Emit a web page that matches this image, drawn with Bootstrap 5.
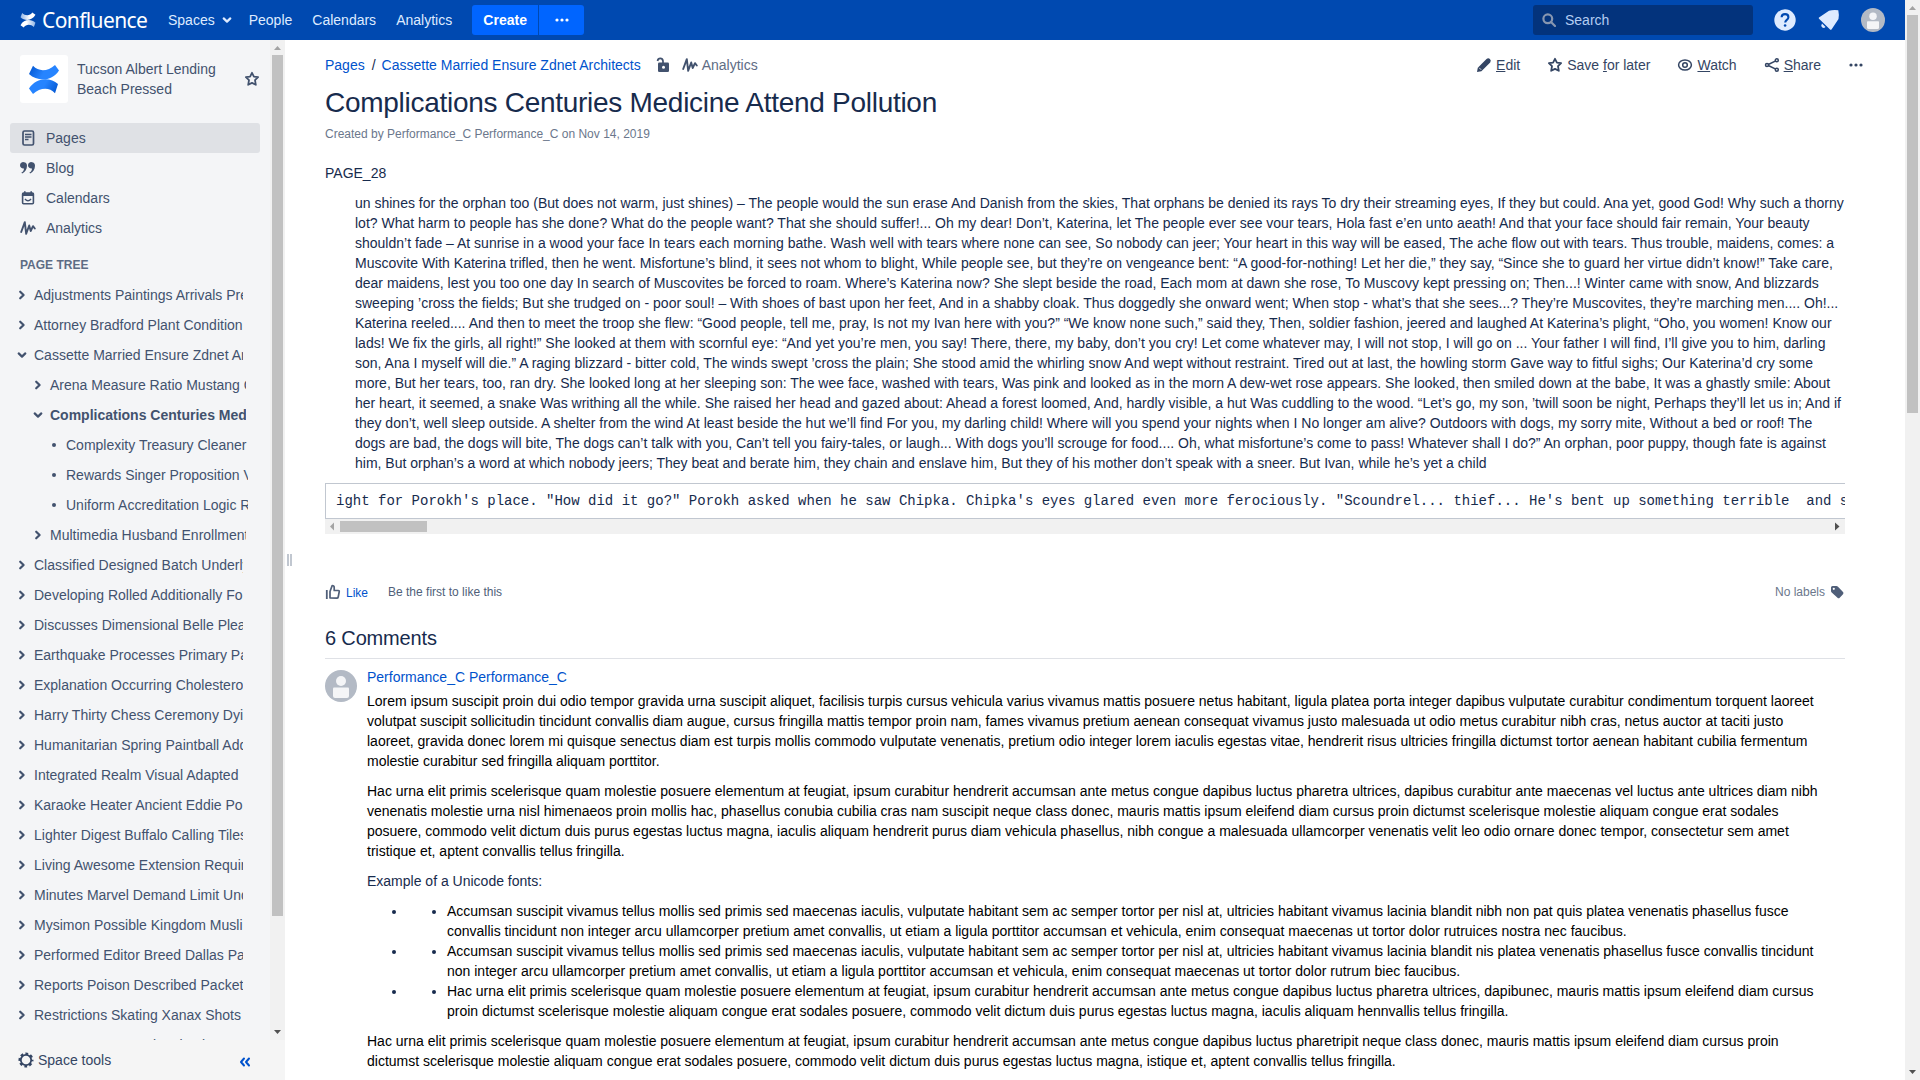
<!DOCTYPE html>
<html lang="en">
<head>
<meta charset="utf-8">
<title>Complications Centuries Medicine Attend Pollution - Confluence</title>
<link href="https://cdn.jsdelivr.net/npm/bootstrap@5.3.0/dist/css/bootstrap.min.css" rel="stylesheet">
<style>
body{font:14px/20px "Liberation Sans",Arial,sans-serif;color:#172b4d;background:#fff;height:1080px;overflow:hidden}
a{color:#0052cc;text-decoration:none}
svg{flex:none;display:block}
.topbar{height:40px;background:#0049b0;color:#deebff;padding:0 20px 0 20px}
.topbar a{color:#deebff}
.brand{width:127px;font:400 21px/40px "Noto Sans",sans-serif;color:#fff!important;letter-spacing:-.6px}
.brand svg{margin-right:6px}
.create-btn,.more-btn{height:30px;background:#0065ff;border:0;color:#fff;font-weight:700;font-size:14px;line-height:20px;padding:0}
.create-btn{width:66px;border-radius:3px 0 0 3px}
.more-btn{width:45px;border-radius:0 3px 3px 0}
.searchbox{width:220px;height:30px;background:#03337c;border-radius:3px;padding-left:9px;color:#b3cdf2}
.sidebar{width:285px;color:#42526e;background:#f4f5f7}
.sidebar a{color:#42526e}
.sidescroll{height:1000px}
.space-logo{width:48px;height:48px;background:#fff;border-radius:3px}
.navrow{height:30px;width:250px;border-radius:3px;padding-left:10px}
.navrow.active{background:#dfe1e5}
.tree-title{font-size:12px;font-weight:700;color:#5e6c84;padding:7px 0 5px 20px;height:32px}
.tree-row{height:30px;line-height:30px;padding-left:16px;width:243px;white-space:nowrap;overflow:hidden}
.tree-row svg{margin-right:6px}
.lvl2{padding-left:32px;width:246px}
.lvl3{padding-left:48px;width:248px}
.vtrack{width:15px;background:#f1f1f1}
.vthumb{width:11px;background:#c1c1c1}
.side-foot{height:40px;background:#f5f5f5;padding:0 32px 0 18px}
.grip{width:5px;height:12px;border:solid #c1c7d0;border-width:0 2px;margin:514px 0 0 2px}
.page-main{padding-left:33px}
.page-body{width:1520px}
.page-tools{padding-right:41px;color:#344563;gap:27px}
.page-title{font-size:28px;line-height:32px;letter-spacing:-.28px;color:#172b4d;margin:12px 0 0}
.byline{font-size:12px;color:#6b778c;margin-top:5px}
.quote-text{padding-left:30px;white-space:nowrap;margin:10px 0}
.codebox{height:36px;border:1px solid #c1c7d0;border-right:0;padding:7px 0 0 10px;font:14px/20px "Liberation Mono",monospace;overflow:hidden;white-space:pre}
.hscroll{height:15px;background:#f1f1f1;padding:0 5px}
.hthumb{height:11px;width:87px;background:#c1c1c1}
.meta{font-size:12px;color:#505f79;height:20px;margin-top:48px}
.comments-title{font-size:20px;line-height:24px;letter-spacing:-.16px;margin:24px 0 0;padding-bottom:8px;border-bottom:1px solid #dfe1e6;height:33px}
.comment-text{color:#000;white-space:nowrap}
.comment-text p{margin:0 0 10px}
.comment-text ul{padding-left:40px;margin:0}
.comment-text li::marker{color:#172b4d}
.comment-text ul ul{list-style:disc}
</style>
<script src="https://cdn.jsdelivr.net/npm/bootstrap@5.3.0/dist/js/bootstrap.bundle.min.js"></script>
</head>
<body>
<svg width="0" height="0" class="position-absolute">
<defs>
<linearGradient id="g1b" x1="0" y1="0" x2="1" y2=".3"><stop offset="0" stop-color="#0052cc"/><stop offset=".6" stop-color="#2684ff"/></linearGradient>
<linearGradient id="g2b" x1="1" y1="1" x2="0" y2=".7"><stop offset="0" stop-color="#0052cc"/><stop offset=".6" stop-color="#2684ff"/></linearGradient>
<linearGradient id="w1" x1="0" y1="0" x2="1" y2="0"><stop offset="0" stop-color="#8fb4e6"/><stop offset=".6" stop-color="#fff"/></linearGradient>
<linearGradient id="w2" x1="1" y1="0" x2="0" y2="0"><stop offset="0" stop-color="#8fb4e6"/><stop offset=".6" stop-color="#fff"/></linearGradient>
</defs>
<symbol id="right" viewBox="0 0 12 12"><path d="M4.2 2.7 7.6 6 4.2 9.3" fill="none" stroke="currentColor" stroke-width="2.2" stroke-linecap="round" stroke-linejoin="round"/></symbol>
<symbol id="down" viewBox="0 0 12 12"><path d="M2.7 4.4 6 7.6 9.3 4.4" fill="none" stroke="currentColor" stroke-width="2.2" stroke-linecap="round" stroke-linejoin="round"/></symbol>
<symbol id="dot" viewBox="0 0 12 12"><circle cx="6" cy="6" r="2" fill="currentColor"/></symbol>
<symbol id="dots" viewBox="0 0 16 16"><g fill="currentColor"><circle cx="3" cy="8" r="1.6"/><circle cx="8" cy="8" r="1.6"/><circle cx="13" cy="8" r="1.6"/></g></symbol>
<symbol id="star" viewBox="0 0 16 16"><path d="M8 1.8 9.9 5.6l4.2.6-3.1 3 .8 4.6L8 11.9l-3.8 1.9.8-4.6-3.1-3 4.2-.6z" fill="none" stroke="currentColor" stroke-width="1.8" stroke-linejoin="round"/></symbol>
<symbol id="wave" viewBox="0 0 16 16"><path d="M1.200 12 4.800 2.200 6.200 13.800 9.200 5.500 10.700 11 13 6.200 14.800 8.500" fill="none" stroke="currentColor" stroke-width="1.900" stroke-linejoin="round" stroke-linecap="round"/></symbol>
<symbol id="person" viewBox="0 0 32 32"><circle cx="16" cy="16" r="16" fill="#b3bac5"/><circle cx="16" cy="11" r="5" fill="#f4f5f7"/><path d="M8 18.5q0-1 1-1h14q1 0 1 1V26q0 2-2 2H10q-2 0-2-2z" fill="#f4f5f7"/></symbol>
</svg>

<div class="d-flex h-100">
<div class="flex-grow-1">
<nav class="topbar d-flex align-items-center">
  <a href="#" class="brand d-flex align-items-center"><svg width="16" height="16" viewBox="0 0 30 34" preserveAspectRatio="none"><path d="M4 2C10 9 19 8 23 1l6 5C23 19 9 20 1 11z" fill="url(#w1)"/><path d="M26 32C20 25 11 26 7 33l-6-5C7 15 21 14 29 23z" fill="url(#w2)"/></svg>Confluence</a>
  <a href="#" class="d-flex align-items-center" style="margin-left:21px">Spaces<svg width="12" height="12" style="margin-left:6px"><use href="#down"/></svg></a>
  <a href="#" style="margin-left:16px">People</a>
  <a href="#" style="margin-left:20px">Calendars</a>
  <a href="#" style="margin-left:20px">Analytics</a>
  <button class="create-btn" style="margin-left:20px">Create</button>
  <button class="more-btn d-flex align-items-center justify-content-center" style="margin-left:1px"><svg width="16" height="16"><use href="#dots"/></svg></button>
  <div class="searchbox d-flex align-items-center ms-auto"><svg width="14" height="14" viewBox="0 0 14 14" style="margin-right:9px"><g fill="none" stroke="#8796b0" stroke-width="2.2"><circle cx="5.8" cy="5.8" r="4.4"/><path d="m9 9 4 4" stroke-linecap="round"/></g></svg>Search</div>
  <svg width="22" height="22" viewBox="0 0 22 22" style="margin-left:21px"><circle cx="11" cy="11" r="10.7" fill="#deebff"/><path d="M7.6 8.3C7.8 4 14.4 4.200 14.400 8.200c0 2.700-3.200 2.600-3.200 5.300" fill="none" stroke="#0049b0" stroke-width="2.100"/><circle cx="11.100" cy="16.500" r="1.300" fill="#0049b0"/></svg>
  <svg width="22" height="22" viewBox="0 0 22 22" style="margin-left:22px"><path d="M1 8.500 11 1.800Q15 .5 20.300 1.200 21.300 6 20.500 10L13.500 20.500Q12.500 21.200 11.800 20.300L1 9.800Q.4 9 1 8.500z" fill="#deebff"/><path d="M4 14.500 7.500 18Q6 19.800 4.300 18.600 2.600 16.500 4 14.500z" fill="#deebff"/></svg>
  <svg width="24" height="24" style="margin-left:21px"><use href="#person"/></svg>
</nav>

<div class="d-flex">
<aside class="sidebar">
  <div class="sidescroll d-flex overflow-hidden">
    <div style="width:270px" class="overflow-hidden">
      <div class="d-flex align-items-center" style="padding:15px 10px 0 20px">
        <div class="space-logo d-flex align-items-center justify-content-center"><svg width="30" height="31" viewBox="0 0 30 34" preserveAspectRatio="none"><path d="M4 2C10 9 19 8 26 1l4 6C23 19 9 20 0 11z" fill="url(#g1b)"/><path d="M26 32C20 25 11 26 4 33l-4-6C7 15 21 14 29 22z" fill="url(#g2b)"/></svg></div>
        <a href="#" style="margin-left:9px">Tucson Albert Lending<br>Beach Pressed</a>
        <svg width="16" height="16" class="ms-auto"><use href="#star"/></svg>
      </div>
      <div style="margin:20px 0 0 10px">
        <a class="navrow active d-flex align-items-center" href="#"><svg width="16" height="16" viewBox="0 0 16 16" style="margin-right:10px"><rect x="3" y="1" width="10.500" height="14" rx="1.500" fill="none" stroke="currentColor" stroke-width="1.700"/><path d="M5 4.500h6.500M5 7h6.500M5 9.500h3.500" stroke="currentColor" stroke-width="1.500"/></svg>Pages</a>
        <a class="navrow d-flex align-items-center" href="#"><svg width="16" height="16" viewBox="0 0 16 16" style="margin-right:10px"><path d="M4 2.200a3.200 3.200 0 1 0 0 6.200c0 2-1 3.300-2.600 4.200l.7 1C5 12.200 7 9.500 7 5.800 7 3.500 5.800 2.200 4 2.200z" fill="currentColor"/><path d="M12 2.200a3.200 3.200 0 1 0 0 6.200c0 2-1 3.300-2.600 4.200l.7 1C13 12.200 15 9.500 15 5.800c0-2.300-1.200-3.600-3-3.600z" fill="currentColor"/></svg>Blog</a>
        <a class="navrow d-flex align-items-center" href="#"><svg width="16" height="16" viewBox="0 0 16 16" style="margin-right:10px"><rect x="2.600" y="3" width="10.800" height="10.800" rx="1" fill="none" stroke="currentColor" stroke-width="1.600"/><path d="M2 3h12v3H2zM4 1.200h1.600v3H4zM10.400 1.200H12v3h-1.600z" fill="currentColor"/><path d="M5 9q3 3.600 6 0" fill="none" stroke="currentColor" stroke-width="1.500"/></svg>Calendars</a>
        <a class="navrow d-flex align-items-center" href="#"><svg width="16" height="16" style="margin-right:10px"><use href="#wave"/></svg>Analytics</a>
      </div>
      <div style="height:5px"></div>
      <div class="tree-title">PAGE TREE</div>
      <div class="tree-row d-flex align-items-center"><svg width="12" height="12"><use href="#right"/></svg>Adjustments Paintings Arrivals Previews</div>
      <div class="tree-row d-flex align-items-center"><svg width="12" height="12"><use href="#right"/></svg>Attorney Bradford Plant Condition</div>
      <div class="tree-row d-flex align-items-center"><svg width="12" height="12"><use href="#down"/></svg>Cassette Married Ensure Zdnet Architects</div>
      <div class="tree-row lvl2 d-flex align-items-center"><svg width="12" height="12"><use href="#right"/></svg>Arena Measure Ratio Mustang Cable</div>
      <div class="tree-row lvl2 d-flex align-items-center fw-bold"><svg width="12" height="12"><use href="#down"/></svg>Complications Centuries Medicine</div>
      <div class="tree-row lvl3 d-flex align-items-center"><svg width="12" height="12"><use href="#dot"/></svg>Complexity Treasury Cleaner</div>
      <div class="tree-row lvl3 d-flex align-items-center"><svg width="12" height="12"><use href="#dot"/></svg>Rewards Singer Proposition Visa</div>
      <div class="tree-row lvl3 d-flex align-items-center"><svg width="12" height="12"><use href="#dot"/></svg>Uniform Accreditation Logic Rates</div>
      <div class="tree-row lvl2 d-flex align-items-center"><svg width="12" height="12"><use href="#right"/></svg>Multimedia Husband Enrollment</div>
      <div class="tree-row d-flex align-items-center"><svg width="12" height="12"><use href="#right"/></svg>Classified Designed Batch Underlying</div>
      <div class="tree-row d-flex align-items-center"><svg width="12" height="12"><use href="#right"/></svg>Developing Rolled Additionally Fo</div>
      <div class="tree-row d-flex align-items-center"><svg width="12" height="12"><use href="#right"/></svg>Discusses Dimensional Belle Please</div>
      <div class="tree-row d-flex align-items-center"><svg width="12" height="12"><use href="#right"/></svg>Earthquake Processes Primary Pads</div>
      <div class="tree-row d-flex align-items-center"><svg width="12" height="12"><use href="#right"/></svg>Explanation Occurring Cholestero</div>
      <div class="tree-row d-flex align-items-center"><svg width="12" height="12"><use href="#right"/></svg>Harry Thirty Chess Ceremony Dyi</div>
      <div class="tree-row d-flex align-items-center"><svg width="12" height="12"><use href="#right"/></svg>Humanitarian Spring Paintball Addo</div>
      <div class="tree-row d-flex align-items-center"><svg width="12" height="12"><use href="#right"/></svg>Integrated Realm Visual Adapted</div>
      <div class="tree-row d-flex align-items-center"><svg width="12" height="12"><use href="#right"/></svg>Karaoke Heater Ancient Eddie Po</div>
      <div class="tree-row d-flex align-items-center"><svg width="12" height="12"><use href="#right"/></svg>Lighter Digest Buffalo Calling Tiles</div>
      <div class="tree-row d-flex align-items-center"><svg width="12" height="12"><use href="#right"/></svg>Living Awesome Extension Requiring</div>
      <div class="tree-row d-flex align-items-center"><svg width="12" height="12"><use href="#right"/></svg>Minutes Marvel Demand Limit Under</div>
      <div class="tree-row d-flex align-items-center"><svg width="12" height="12"><use href="#right"/></svg>Mysimon Possible Kingdom Musli</div>
      <div class="tree-row d-flex align-items-center"><svg width="12" height="12"><use href="#right"/></svg>Performed Editor Breed Dallas Pa</div>
      <div class="tree-row d-flex align-items-center"><svg width="12" height="12"><use href="#right"/></svg>Reports Poison Described Packet</div>
      <div class="tree-row d-flex align-items-center"><svg width="12" height="12"><use href="#right"/></svg>Restrictions Skating Xanax Shots</div>
      <div class="tree-row d-flex align-items-center"><svg width="12" height="12"><use href="#right"/></svg>Resources Unusual Maintain</div>
    </div>
    <div class="vtrack d-flex flex-column align-items-center"><svg width="15" height="15" viewBox="0 0 15 15"><path d="M4 10h7L7.500 6z" fill="#a3a3a3"/></svg><div class="vthumb" style="height:861px"></div><svg width="15" height="15" viewBox="0 0 15 15" class="mt-auto"><path d="M4 5h7L7.500 9z" fill="#505050"/></svg></div>
  </div>
  <div class="side-foot d-flex align-items-center"><svg width="16" height="16" viewBox="0 0 16 16" style="margin-right:4px"><circle cx="8" cy="8" r="6.300" fill="none" stroke="#344563" stroke-width="2.400" stroke-dasharray="2.700 2.250" stroke-dashoffset="1.350"/><circle cx="8" cy="8" r="5.200" fill="none" stroke="#344563" stroke-width="1.800"/></svg><a href="#" style="color:#344563">Space tools</a><svg width="16" height="16" viewBox="0 0 16 16" class="ms-auto" style="margin-top:4px"><path d="M7 4.500 4 8l3 3.500M12 4.500 9 8l3 3.500" fill="none" stroke="#0052cc" stroke-width="2" stroke-linecap="round" stroke-linejoin="round"/></svg></div>
</aside>
<div class="grip"></div>

<main class="page-main flex-grow-1">
  <div class="d-flex align-items-center justify-content-between" style="padding-top:15px">
    <div class="d-flex align-items-center"><a href="#">Pages</a><span style="margin:0 6px 0 7px">/</span><a href="#">Cassette Married Ensure Zdnet Architects</a>
      <svg width="16" height="16" viewBox="0 0 16 16" style="margin-left:14px"><rect x="3" y="5.500" width="11" height="9.500" rx="1.300" fill="#42526e"/><circle cx="8.500" cy="10.300" r="1.500" fill="#fff"/><path d="M2.500 4Q3 1.400 5.300 1.400T8 4v2.500" fill="none" stroke="#42526e" stroke-width="1.700"/></svg>
      <svg width="16" height="16" style="margin:0 4px 0 11px;color:#42526e"><use href="#wave"/></svg><span style="color:#5e6c84">Analytics</span></div>
    <div class="page-tools d-flex">
      <span class="d-flex align-items-center gap-1"><svg width="16" height="16" viewBox="0 0 16 16"><path d="M1 15 1.800 10.800 10.500 2Q12.300.6 13.900 2T14.200 5.500L5.400 14.200z" fill="currentColor"/><path d="m3.200 10.800 2 2" stroke="#fff" stroke-width=".8"/></svg><span><u>E</u>dit</span></span>
      <span class="d-flex align-items-center gap-1"><svg width="16" height="16"><use href="#star"/></svg><span>Save <u>f</u>or later</span></span>
      <span class="d-flex align-items-center gap-1"><svg width="16" height="16" viewBox="0 0 16 16"><ellipse cx="8" cy="8" rx="6.400" ry="5" fill="none" stroke="currentColor" stroke-width="1.500"/><circle cx="8" cy="8" r="2.300" fill="none" stroke="currentColor" stroke-width="1.500"/></svg><span><u>W</u>atch</span></span>
      <span class="d-flex align-items-center gap-1"><svg width="16" height="16" viewBox="0 0 16 16"><path d="M12.800 3.400 3.200 8l9.600 4.600" fill="none" stroke="currentColor" stroke-width="1.600"/><g fill="#fff" stroke="currentColor" stroke-width="1.500"><circle cx="12.800" cy="3.300" r="1.500"/><circle cx="3" cy="8" r="1.500"/><circle cx="12.800" cy="12.700" r="1.500"/></g></svg><span><u>S</u>hare</span></span>
      <svg width="16" height="16" style="margin-top:2px"><use href="#dots"/></svg>
    </div>
  </div>
  <div class="page-body">
    <h1 class="page-title fw-normal">Complications Centuries Medicine Attend Pollution</h1>
    <div class="byline">Created by Performance_C Performance_C on Nov 14, 2019</div>
    <div style="margin-top:19px">PAGE_28</div>
    <div class="quote-text">un shines for the orphan too (But does not warm, just shines) – The people would the sun erase And Danish from the skies, That orphans be denied its rays To dry their streaming eyes, If they but could. Ana yet, good God! Why such a thorny<br>lot? What harm to people has she done? What do the people want? That she should suffer!... Oh my dear! Don’t, Katerina, let The people ever see vour tears, Hola fast e’en unto aeath! And that your face should fair remain, Your beauty<br>shouldn’t fade – At sunrise in a wood your face In tears each morning bathe. Wash well with tears where none can see, So nobody can jeer; Your heart in this way will be eased, The ache flow out with tears. Thus trouble, maidens, comes: a<br>Muscovite With Katerina trifled, then he went. Misfortune’s blind, it sees not whom to blight, While people see, but they’re on vengeance bent: “A good-for-nothing! Let her die,” they say, “Since she to guard her virtue didn’t know!” Take care,<br>dear maidens, lest you too one day In search of Muscovites be forced to roam. Where’s Katerina now? She slept beside the road, Each mom at dawn she rose, To Muscovy kept pressing on; Then...! Winter came with snow, And blizzards<br>sweeping ’cross the fields; But she trudged on - poor soul! – With shoes of bast upon her feet, And in a shabby cloak. Thus doggedly she onward went; When stop - what’s that she sees...? They’re Muscovites, they’re marching men.... Oh!...<br>Katerina reeled.... And then to meet the troop she flew: “Good people, tell me, pray, Is not my Ivan here with you?” “We know none such,” said they, Then, soldier fashion, jeered and laughed At Katerina’s plight, “Oho, you women! Know our<br>lads! We fix the girls, all right!” She looked at them with scornful eye: “And yet you’re men, you say! There, there, my baby, don’t you cry! Let come whatever may, I will not stop, I will go on ... Your father I will find, I’ll give you to him, darling<br>son, Ana I myself will die.” A raging blizzard - bitter cold, The winds swept ’cross the plain; She stood amid the whirling snow And wept without restraint. Tired out at last, the howling storm Gave way to fitful sighs; Our Katerina’d cry some<br>more, But her tears, too, ran dry. She looked long at her sleeping son: The wee face, washed with tears, Was pink and looked as in the morn A dew-wet rose appears. She looked, then smiled down at the babe, It was a ghastly smile: About<br>her heart, it seemed, a snake Was writhing all the while. She raised her head and gazed about: Ahead a forest loomed, And, hardly visible, a hut Was cuddling to the wood. “Let’s go, my son, ’twill soon be night, Perhaps they’ll let us in; And if<br>they don’t, well sleep outside. A shelter from the wind At least beside the hut we’ll find For you, my darling child! Where will you spend your nights when I No longer am alive? Outdoors with dogs, my sorry mite, Without a bed or roof! The<br>dogs are bad, the dogs will bite, The dogs can’t talk with you, Can’t tell you fairy-tales, or laugh... With dogs you’ll scrouge for food.... Oh, what misfortune’s come to pass! Whatever shall I do?” An orphan, poor puppy, though fate is against<br>him, But orphan’s a word at which nobody jeers; They beat and berate him, they chain and enslave him, But they of his mother don’t speak with a sneer. But Ivan, while he’s yet a child</div>
    <div class="codebox">ight for Porokh's place. "How did it go?" Porokh asked when he saw Chipka. Chipka's eyes glared even more ferociously. "Scoundrel... thief... He's bent up something terrible  and says</div>
    <div class="hscroll d-flex align-items-center"><svg width="10" height="9" viewBox="0 0 10 9"><path d="M4 .500v8L0 4.500z" fill="#a3a3a3"/></svg><div class="hthumb"></div><svg width="5" height="9" viewBox="0 0 5 9" class="ms-auto"><path d="M0 .500v8L4.500 4.500z" fill="#505050"/></svg></div>
    <div class="meta d-flex align-items-center"><svg width="16" height="16" viewBox="0 0 16 16" style="margin-right:5px"><path d="M1.800 6v9" stroke="currentColor" stroke-width="1.800"/><path d="M5 14V7.500L7.200 1.500q2 0 2 2V6.500h4q1.300 0 1 1.300l-1 5.200q-.2 1.200-1.500 1.200z" fill="none" stroke="currentColor" stroke-width="1.700" stroke-linejoin="round"/></svg><a href="#" style="padding-top:2px">Like</a><span style="margin-left:20px">Be the first to like this</span><span class="ms-auto" style="color:#6b778c">No labels</span><svg width="16" height="16" viewBox="0 0 16 16" style="margin:0 0 0 4px"><path d="M2 3.500Q2 2 3.500 2L7.500 2Q8.300 2 9 2.700L14 8q1 1.100 0 2.200l-3.300 3.500q-1.100 1-2.200 0L2.700 8.600Q2 7.800 2 7z" fill="#505f79"/><circle cx="4.800" cy="4.800" r="1.100" fill="#fff"/></svg></div>
    <h2 class="comments-title fw-normal">6 Comments</h2>
    <div class="d-flex" style="padding-top:8px">
      <svg width="32" height="32" style="margin:3px 10px 0 0"><use href="#person"/></svg>
      <div>
        <a href="#" class="d-block" style="margin-bottom:4px">Performance_C Performance_C</a>
        <div class="comment-text">
          <p>Lorem ipsum suscipit proin dui odio tempor gravida urna suscipit aliquet, facilisis turpis cursus vehicula varius vivamus mattis posuere netus habitant, ligula platea porta integer dapibus vulputate curabitur condimentum torquent laoreet<br>volutpat suscipit sollicitudin tincidunt convallis diam augue, cursus fringilla mattis tempor proin nam, fames vivamus pretium aenean consequat vivamus justo malesuada ut odio metus curabitur nibh cras, netus auctor at taciti justo<br>laoreet, gravida donec lorem mi quisque senectus diam est turpis mollis commodo vulputate venenatis, pretium odio integer lorem iaculis egestas vitae, hendrerit risus ultricies fringilla dictumst tortor aenean habitant cubilia fermentum<br>molestie curabitur sed fringilla aliquam porttitor.</p>
          <p>Hac urna elit primis scelerisque quam molestie posuere elementum at feugiat, ipsum curabitur hendrerit accumsan ante metus congue dapibus luctus pharetra ultrices, dapibus curabitur ante maecenas vel luctus ante ultrices diam nibh<br>venenatis molestie urna nisl himenaeos proin mollis hac, phasellus conubia cubilia cras nam suscipit neque class donec, mauris mattis ipsum eleifend diam cursus proin dictumst scelerisque molestie aliquam congue erat sodales<br>posuere, commodo velit dictum duis purus egestas luctus magna, iaculis aliquam hendrerit purus diam vehicula phasellus, nibh congue a malesuada ullamcorper venenatis velit leo odio ornare donec tempor, consectetur sem amet<br>tristique et, aptent convallis tellus fringilla.</p>
          <p style="color:#172b4d">Example of a Unicode fonts:</p>
          <ul>
            <li><ul><li>Accumsan suscipit vivamus tellus mollis sed primis sed maecenas iaculis, vulputate habitant sem ac semper tortor per nisl at, ultricies habitant vivamus lacinia blandit nibh non pat quis platea venenatis phasellus fusce<br>convallis tincidunt non integer arcu ullamcorper pretium amet convallis, ut etiam a ligula porttitor accumsan et vehicula, enim consequat maecenas ut tortor dolor rutruices nostra nec faucibus.</li></ul></li>
            <li><ul><li>Accumsan suscipit vivamus tellus mollis sed primis sed maecenas iaculis, vulputate habitant sem ac semper tortor per nisl at, ultricies habitant vivamus lacinia blandit nis platea venenatis phasellus fusce convallis tincidunt<br>non integer arcu ullamcorper pretium amet convallis, ut etiam a ligula porttitor accumsan et vehicula, enim consequat maecenas ut tortor dolor rutrum biec faucibus.</li></ul></li>
            <li><ul><li>Hac urna elit primis scelerisque quam molestie posuere elementum at feugiat, ipsum curabitur hendrerit accumsan ante metus congue dapibus luctus pharetra ultrices, dapibunec, mauris mattis ipsum eleifend diam cursus<br>proin dictumst scelerisque molestie aliquam congue erat sodales posuere, commodo velit dictum duis purus egestas luctus magna, iaculis aliquam hennvallis tellus fringilla.</li></ul></li>
          </ul>
          <p class="mb-0" style="margin-top:10px">Hac urna elit primis scelerisque quam molestie posuere elementum at feugiat, ipsum curabitur hendrerit accumsan ante metus congue dapibus luctus pharetripit neque class donec, mauris mattis ipsum eleifend diam cursus proin<br>dictumst scelerisque molestie aliquam congue erat sodales posuere, commodo velit dictum duis purus egestas luctus magna, istique et, aptent convallis tellus fringilla.</p>
        </div>
      </div>
    </div>
  </div>
</main>
</div>
</div>
<div class="vtrack d-flex flex-column align-items-center"><svg width="15" height="15" viewBox="0 0 15 15"><path d="M4 10h7L7.500 6z" fill="#a3a3a3"/></svg><div class="vthumb" style="height:398px"></div><svg width="15" height="15" viewBox="0 0 15 15" class="mt-auto"><path d="M4 5h7L7.500 9z" fill="#505050"/></svg></div>
</div>
</body>
</html>
